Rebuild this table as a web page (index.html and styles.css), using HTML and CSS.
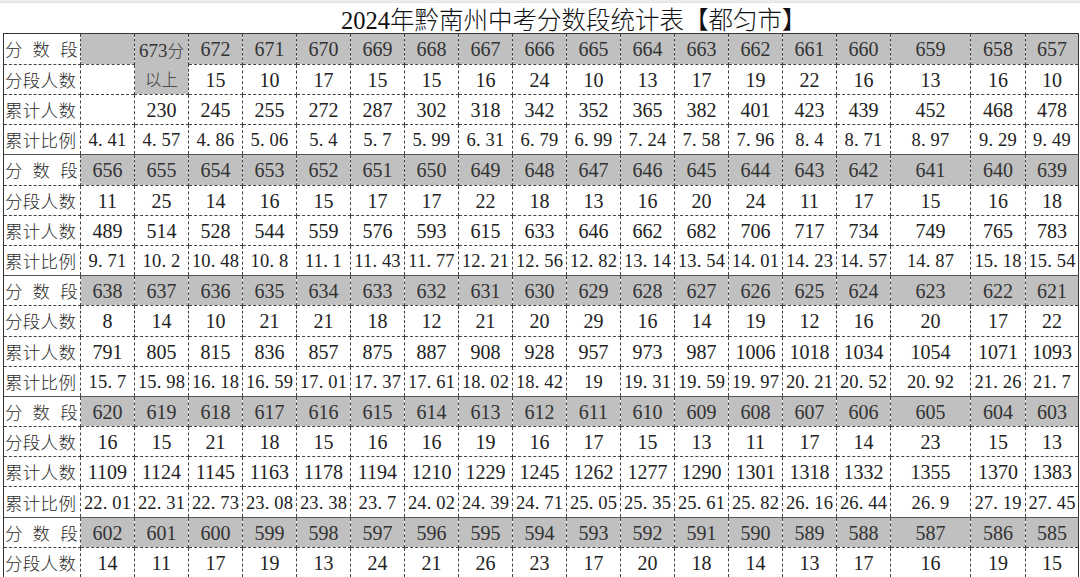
FILE: index.html
```html
<!DOCTYPE html>
<html lang="zh-CN">
<head>
<meta charset="utf-8">
<title>2024年黔南州中考分数段统计表【都匀市】</title>
<link rel="stylesheet" href="styles.css">
</head>
<body>
<div class="sheet-top"></div>
<div class="title">2024<span class="tcjk">年黔南州中考分数段统计表【都匀市】</span></div>
<table class="grid">
<colgroup>
<col class="c-label"><col class="c-n"><col class="c-n"><col class="c-n"><col class="c-n"><col class="c-n"><col class="c-n"><col class="c-n"><col class="c-n"><col class="c-n"><col class="c-n"><col class="c-n"><col class="c-n"><col class="c-n"><col class="c-n"><col class="c-n"><col class="c-w"><col class="c-m"><col class="c-r">
</colgroup>
<tbody>
<tr class="score first">
<th><span class="spread"><span>分</span><span>数</span><span>段</span></span></th>
<td></td><td rowspan="2" class="top"><span class="n19">673</span><span class="cjk">分</span><br><span class="cjk">以上</span></td>
<td>672</td><td>671</td><td>670</td><td>669</td><td>668</td><td>667</td><td>666</td><td>665</td><td>664</td><td>663</td><td>662</td><td>661</td><td>660</td><td>659</td><td>658</td><td>657</td>
</tr>
<tr>
<th>分段人数</th>
<td class="white"></td>
<td>15</td><td>10</td><td>17</td><td>15</td><td>15</td><td>16</td><td>24</td><td>10</td><td>13</td><td>17</td><td>19</td><td>22</td><td>16</td><td>13</td><td>16</td><td>10</td>
</tr>
<tr>
<th>累计人数</th>
<td></td><td>230</td><td>245</td><td>255</td><td>272</td><td>287</td><td>302</td><td>318</td><td>342</td><td>352</td><td>365</td><td>382</td><td>401</td><td>423</td><td>439</td><td>452</td><td>468</td><td>478</td>
</tr>
<tr class="ratio">
<th>累计比例</th>
<td>4<i>.</i>41</td><td>4<i>.</i>57</td><td>4<i>.</i>86</td><td>5<i>.</i>06</td><td>5<i>.</i>4</td><td>5<i>.</i>7</td><td>5<i>.</i>99</td><td>6<i>.</i>31</td><td>6<i>.</i>79</td><td>6<i>.</i>99</td><td>7<i>.</i>24</td><td>7<i>.</i>58</td><td>7<i>.</i>96</td><td>8<i>.</i>4</td><td>8<i>.</i>71</td><td>8<i>.</i>97</td><td>9<i>.</i>29</td><td>9<i>.</i>49</td>
</tr>

<tr class="score group">
<th><span class="spread"><span>分</span><span>数</span><span>段</span></span></th>
<td>656</td><td>655</td><td>654</td><td>653</td><td>652</td><td>651</td><td>650</td><td>649</td><td>648</td><td>647</td><td>646</td><td>645</td><td>644</td><td>643</td><td>642</td><td>641</td><td>640</td><td>639</td>
</tr>
<tr>
<th>分段人数</th>
<td>11</td><td>25</td><td>14</td><td>16</td><td>15</td><td>17</td><td>17</td><td>22</td><td>18</td><td>13</td><td>16</td><td>20</td><td>24</td><td>11</td><td>17</td><td>15</td><td>16</td><td>18</td>
</tr>
<tr>
<th>累计人数</th>
<td>489</td><td>514</td><td>528</td><td>544</td><td>559</td><td>576</td><td>593</td><td>615</td><td>633</td><td>646</td><td>662</td><td>682</td><td>706</td><td>717</td><td>734</td><td>749</td><td>765</td><td>783</td>
</tr>
<tr class="ratio">
<th>累计比例</th>
<td>9<i>.</i>71</td><td>10<i>.</i>2</td><td>10<i>.</i>48</td><td>10<i>.</i>8</td><td>11<i>.</i>1</td><td>11<i>.</i>43</td><td>11<i>.</i>77</td><td>12<i>.</i>21</td><td>12<i>.</i>56</td><td>12<i>.</i>82</td><td>13<i>.</i>14</td><td>13<i>.</i>54</td><td>14<i>.</i>01</td><td>14<i>.</i>23</td><td>14<i>.</i>57</td><td>14<i>.</i>87</td><td>15<i>.</i>18</td><td>15<i>.</i>54</td>
</tr>

<tr class="score group">
<th><span class="spread"><span>分</span><span>数</span><span>段</span></span></th>
<td>638</td><td>637</td><td>636</td><td>635</td><td>634</td><td>633</td><td>632</td><td>631</td><td>630</td><td>629</td><td>628</td><td>627</td><td>626</td><td>625</td><td>624</td><td>623</td><td>622</td><td>621</td>
</tr>
<tr>
<th>分段人数</th>
<td>8</td><td>14</td><td>10</td><td>21</td><td>21</td><td>18</td><td>12</td><td>21</td><td>20</td><td>29</td><td>16</td><td>14</td><td>19</td><td>12</td><td>16</td><td>20</td><td>17</td><td>22</td>
</tr>
<tr>
<th>累计人数</th>
<td>791</td><td>805</td><td>815</td><td>836</td><td>857</td><td>875</td><td>887</td><td>908</td><td>928</td><td>957</td><td>973</td><td>987</td><td>1006</td><td>1018</td><td>1034</td><td>1054</td><td>1071</td><td>1093</td>
</tr>
<tr class="ratio">
<th>累计比例</th>
<td>15<i>.</i>7</td><td>15<i>.</i>98</td><td>16<i>.</i>18</td><td>16<i>.</i>59</td><td>17<i>.</i>01</td><td>17<i>.</i>37</td><td>17<i>.</i>61</td><td>18<i>.</i>02</td><td>18<i>.</i>42</td><td>19</td><td>19<i>.</i>31</td><td>19<i>.</i>59</td><td>19<i>.</i>97</td><td>20<i>.</i>21</td><td>20<i>.</i>52</td><td>20<i>.</i>92</td><td>21<i>.</i>26</td><td>21<i>.</i>7</td>
</tr>

<tr class="score group">
<th><span class="spread"><span>分</span><span>数</span><span>段</span></span></th>
<td>620</td><td>619</td><td>618</td><td>617</td><td>616</td><td>615</td><td>614</td><td>613</td><td>612</td><td>611</td><td>610</td><td>609</td><td>608</td><td>607</td><td>606</td><td>605</td><td>604</td><td>603</td>
</tr>
<tr>
<th>分段人数</th>
<td>16</td><td>15</td><td>21</td><td>18</td><td>15</td><td>16</td><td>16</td><td>19</td><td>16</td><td>17</td><td>15</td><td>13</td><td>11</td><td>17</td><td>14</td><td>23</td><td>15</td><td>13</td>
</tr>
<tr>
<th>累计人数</th>
<td>1109</td><td>1124</td><td>1145</td><td>1163</td><td>1178</td><td>1194</td><td>1210</td><td>1229</td><td>1245</td><td>1262</td><td>1277</td><td>1290</td><td>1301</td><td>1318</td><td>1332</td><td>1355</td><td>1370</td><td>1383</td>
</tr>
<tr class="ratio">
<th>累计比例</th>
<td>22<i>.</i>01</td><td>22<i>.</i>31</td><td>22<i>.</i>73</td><td>23<i>.</i>08</td><td>23<i>.</i>38</td><td>23<i>.</i>7</td><td>24<i>.</i>02</td><td>24<i>.</i>39</td><td>24<i>.</i>71</td><td>25<i>.</i>05</td><td>25<i>.</i>35</td><td>25<i>.</i>61</td><td>25<i>.</i>82</td><td>26<i>.</i>16</td><td>26<i>.</i>44</td><td>26<i>.</i>9</td><td>27<i>.</i>19</td><td>27<i>.</i>45</td>
</tr>

<tr class="score group">
<th><span class="spread"><span>分</span><span>数</span><span>段</span></span></th>
<td>602</td><td>601</td><td>600</td><td>599</td><td>598</td><td>597</td><td>596</td><td>595</td><td>594</td><td>593</td><td>592</td><td>591</td><td>590</td><td>589</td><td>588</td><td>587</td><td>586</td><td>585</td>
</tr>
<tr>
<th>分段人数</th>
<td>14</td><td>11</td><td>17</td><td>19</td><td>13</td><td>24</td><td>21</td><td>26</td><td>23</td><td>17</td><td>20</td><td>18</td><td>14</td><td>13</td><td>17</td><td>16</td><td>19</td><td>15</td>
</tr>
</tbody>
</table>
</body>
</html>
```

FILE: styles.css
```css
html, body {
  margin: 0;
  padding: 0;
  background: #ffffff;
  overflow: hidden;
}

body {
  width: 1080px;
  height: 577px;
  color: #222;
  font-family: "Liberation Serif", "Noto Sans CJK SC", serif;
}

.sheet-top {
  height: 3px;
  background: #ececec;
  border-bottom: 1px solid #e2e2e2;
  box-sizing: border-box;
}

.title {
  height: 30px;
  line-height: 31px;
  padding-left: 341px;
  font-size: 24.5px;
  font-family: "Liberation Serif", "Noto Sans CJK SC", serif;
  color: #111;
  white-space: nowrap;
}

.tcjk {
  font-family: "Noto Sans CJK SC", sans-serif;
  font-weight: 300;
}

.grid {
  margin-left: 3px;
  width: 1075px;
  table-layout: fixed;
  border-collapse: collapse;
  border: 1px solid #333;
}

.c-label { width: 77px; }
.c-n { width: 54px; }
.c-w { width: 80px; }
.c-m { width: 55px; }
.c-r { width: 53px; }

.grid tr {
  height: 30.2px;
}

.grid th,
.grid td {
  padding: 0;
  border: 1px dashed #444;
  vertical-align: middle;
  white-space: nowrap;
  overflow: hidden;
}

.grid th {
  text-align: left;
  padding-left: 1px;
  font-weight: 300;
  font-family: "Noto Sans CJK SC", sans-serif;
  font-size: 17.5px;
  letter-spacing: 0.3px;
  color: #2a2a2a;
  border-left: 1px solid #333;
}

.grid td {
  text-align: center;
  font-size: 20px;
  padding-top: 2px;
}

.grid tr.group th,
.grid tr.group td {
  border-top: 1px solid #555;
}

.grid tr.first th,
.grid tr.first td {
  border-top: 1px solid #333;
}

.grid tr.score td {
  background: #c0c0c0;
  color: #333;
}

.grid td.white {
  background: #fff;
}

.spread {
  display: flex;
  justify-content: space-between;
  padding-right: 2px;
}

.top {
  vertical-align: top;
  line-height: 29px;
  padding-top: 4px;
}

.n19 {
  font-size: 19px;
}

.cjk {
  font-family: "Noto Sans CJK SC", sans-serif;
  font-weight: 300;
  font-size: 16.5px;
  color: #333;
}

.ratio td {
  font-size: 18.5px;
  letter-spacing: 0.2px;
}

.ratio i {
  font-style: normal;
  letter-spacing: 0.26em;
}
```
